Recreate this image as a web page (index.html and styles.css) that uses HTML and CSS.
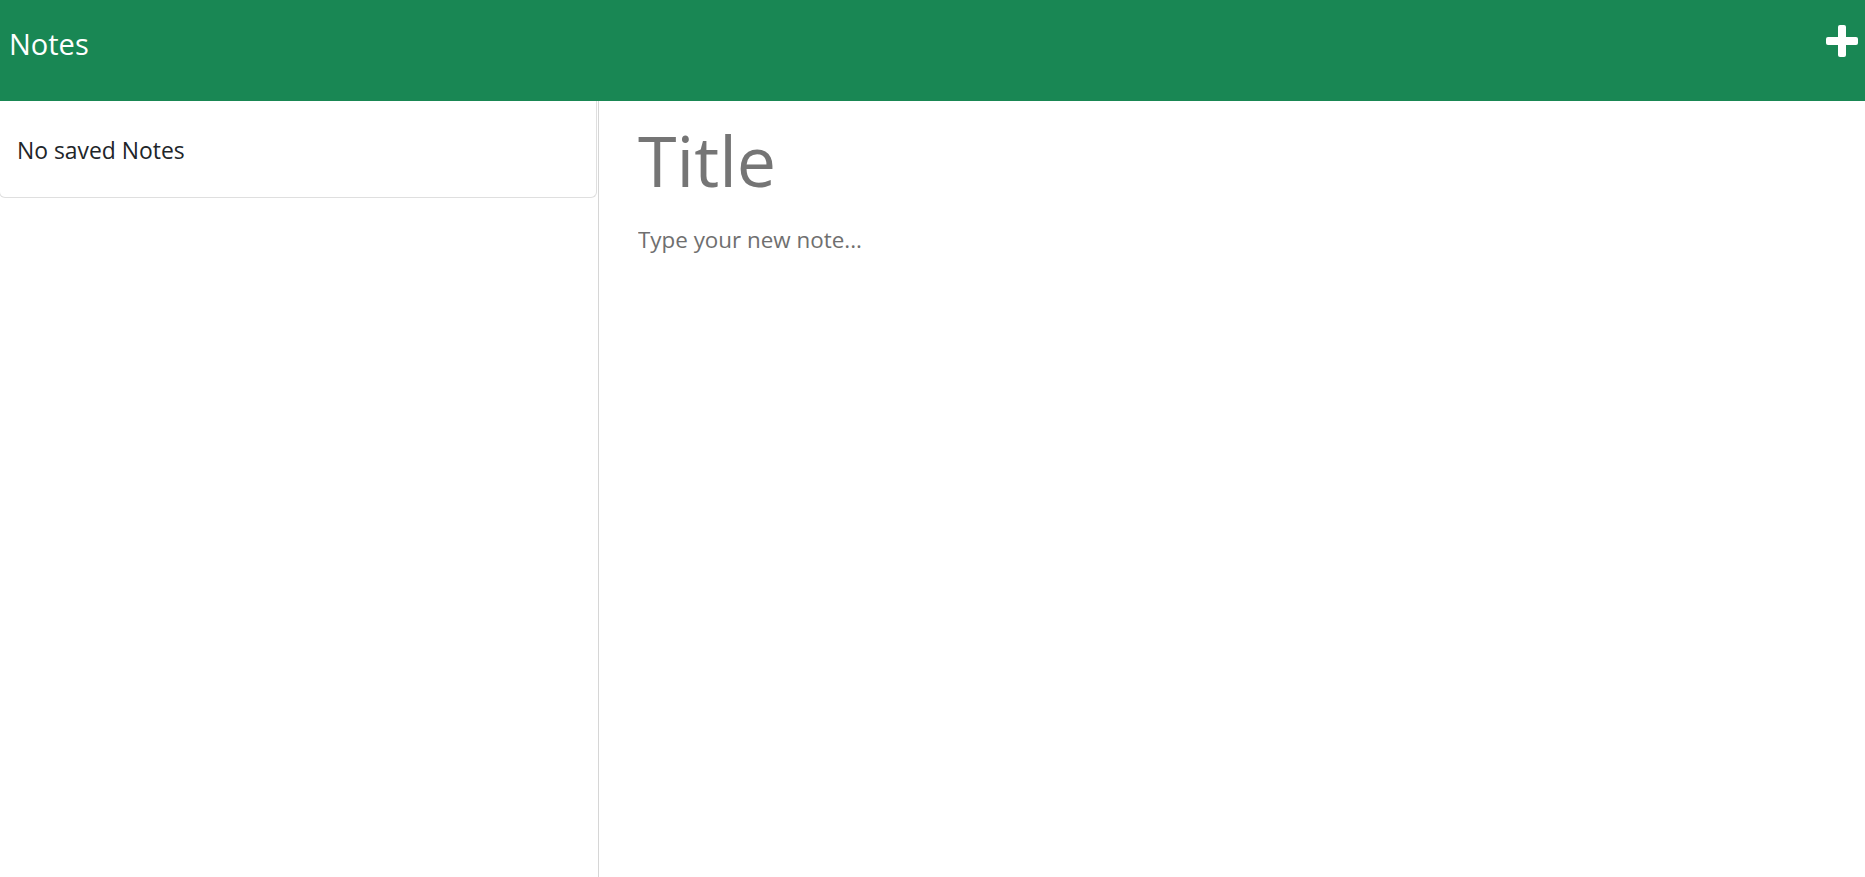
FILE: index.html
```html
<!DOCTYPE html>
<html lang="en">
<head>
<meta charset="utf-8">
<title>Note Taker</title>
<link rel="stylesheet" href="styles.css">
</head>
<body>
<nav class="navbar">
  <span class="brand">Notes</span>
  <span class="icons">
    <svg class="plus" width="32" height="32" viewBox="0 0 32 32" aria-label="New note">
      <rect x="12" y="0" width="8" height="32" rx="2" fill="#fff"/>
      <rect x="0" y="12" width="32" height="8" rx="2" fill="#fff"/>
    </svg>
  </span>
</nav>
<div class="container">
  <aside class="sidebar">
    <ul class="list-group">
      <li class="list-group-item">No saved Notes</li>
    </ul>
  </aside>
  <main class="editor">
    <input class="note-title" type="text" placeholder="Title" maxlength="28">
    <textarea class="note-textarea" placeholder="Type your new note..."></textarea>
  </main>
</div>
</body>
</html>
```
FILE: styles.css
```css
* { box-sizing: border-box; }
html, body { height: 100%; }
body {
  margin: 0;
  font-family: "Open Sans", "Noto Sans", sans-serif;
  color: #212529;
  background: #fff;
  display: flex;
  flex-direction: column;
}
.navbar {
  height: 101px;
  flex: 0 0 auto;
  background: #198754;
  display: flex;
  align-items: center;
  justify-content: space-between;
  padding: 0 7px 20px 9px;
}
.brand {
  color: #fff;
  font-size: 29px;
  line-height: 1;
  margin-top: 6px;
}
.icons { display: flex; align-items: center; }
.plus { display: block; }
.container {
  flex: 1 1 auto;
  display: flex;
  min-height: 0;
}
.sidebar {
  width: 599px;
  flex: 0 0 599px;
  border-right: 1px solid #d6d6d6;
}
.list-group {
  list-style: none;
  margin: 0;
  padding: 0;
}
.list-group-item {
  height: 97px;
  margin-left: -1px;
  margin-right: 1px;
  padding: 2px 0 0 17px;
  display: flex;
  align-items: center;
  font-size: 22.9px;
  color: #212529;
  border: 1px solid #dfdfdf;
  border-top: 0;
  border-radius: 0 0 6px 6px;
}
.editor {
  flex: 1 1 auto;
  display: flex;
  flex-direction: column;
  padding: 13px 0 0 39px;
}
.note-title {
  border: 0;
  outline: 0;
  padding: 0;
  font-family: inherit;
  font-size: 70px;
  height: 92px;
  color: #212529;
  background: transparent;
}
.note-title::placeholder { color: #757575; }
.note-textarea {
  border: 0;
  outline: 0;
  padding: 0;
  margin-top: 17px;
  resize: none;
  font-family: inherit;
  font-size: 22.4px;
  line-height: 1.5;
  flex: 1 1 auto;
  background: transparent;
}
.note-textarea::placeholder { color: #6f6f6f; }
```
